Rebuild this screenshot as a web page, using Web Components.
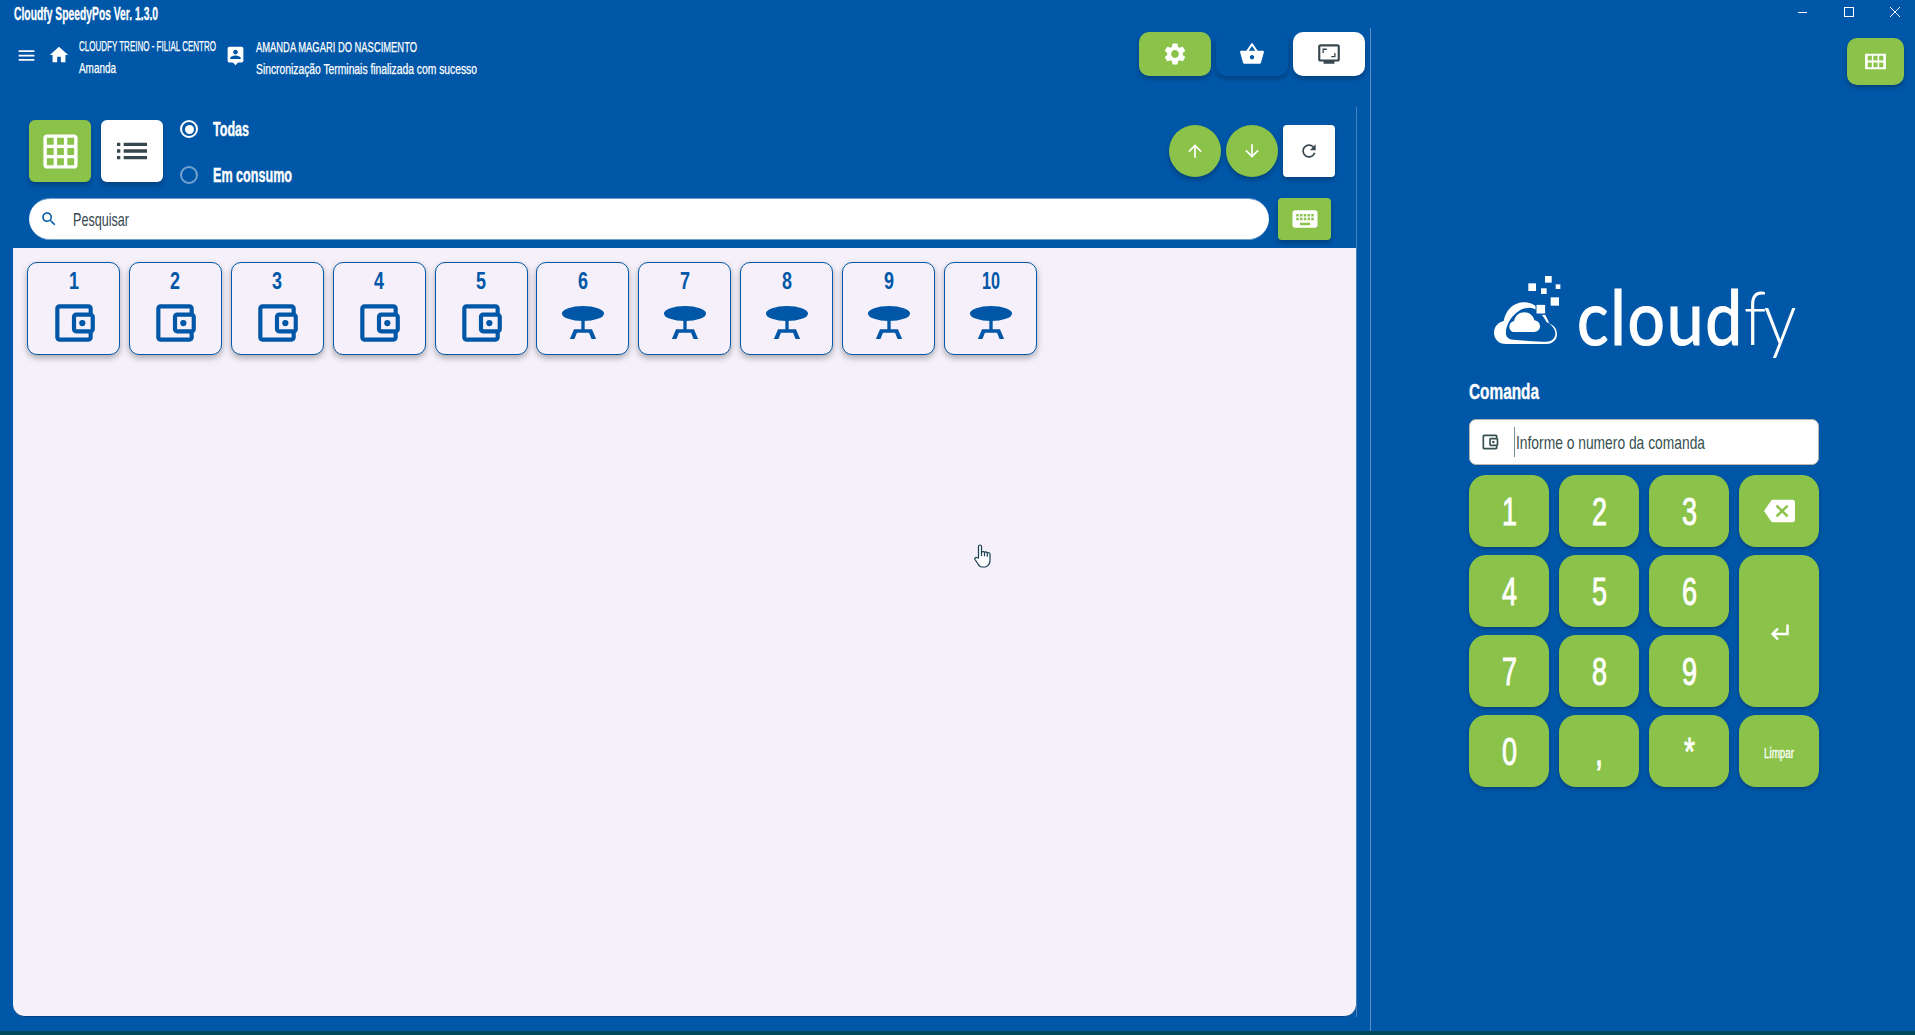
<!DOCTYPE html>
<html lang="pt-BR">
<head>
<meta charset="utf-8">
<title>Cloudfy SpeedyPos</title>
<style>
  html, body { margin: 0; height: 100%; }
  body {
    background: #0057a8;
    overflow: hidden;
    color: #fff;
    font-family: "Liberation Sans", sans-serif;
  }
</style>
</head>
<body>
<pos-app></pos-app>

<script>
/**
 * Icon set: the 24x24 paths the app uses.
 */
const ICONS = {
  menu: '<path d="M3 18h18v-2H3v2zm0-5h18v-2H3v2zm0-7v2h18V6H3z"/>',
  home: '<path d="M10 20v-6h4v6h5v-8h3L12 3 2 12h3v8z"/>',
  person: '<path d="M19 2H5c-1.11 0-2 .9-2 2v14c0 1.1.89 2 2 2h4l3 3 3-3h4c1.1 0 2-.9 2-2V4c0-1.1-.9-2-2-2zm-7 3.3c1.49 0 2.7 1.21 2.7 2.7 0 1.49-1.21 2.7-2.7 2.7-1.49 0-2.7-1.21-2.7-2.7 0-1.49 1.21-2.7 2.7-2.7zM18 16H6v-.9c0-2 4-3.1 6-3.1s6 1.1 6 3.1v.9z"/>',
  settings: '<path d="M19.14 12.94c.04-.3.06-.61.06-.94 0-.32-.02-.64-.07-.94l2.03-1.58c.18-.14.23-.41.12-.61l-1.92-3.32c-.12-.22-.37-.29-.59-.22l-2.39.96c-.5-.38-1.03-.7-1.62-.94l-.36-2.54c-.04-.24-.24-.41-.48-.41h-3.84c-.24 0-.43.17-.47.41l-.36 2.54c-.59.24-1.13.57-1.62.94l-2.39-.96c-.22-.08-.47 0-.59.22L2.74 8.87c-.12.21-.08.47.12.61l2.03 1.58c-.05.3-.09.63-.09.94s.02.64.07.94l-2.03 1.58c-.18.14-.23.41-.12.61l1.92 3.32c.12.22.37.29.59.22l2.39-.96c.5.38 1.03.7 1.62.94l.36 2.54c.05.24.24.41.48.41h3.84c.24 0 .44-.17.47-.41l.36-2.54c.59-.24 1.13-.56 1.62-.94l2.39.96c.22.08.47 0 .59-.22l1.92-3.32c.12-.22.07-.47-.12-.61l-2.01-1.58zM12 15.6c-1.98 0-3.6-1.62-3.6-3.6s1.62-3.6 3.6-3.6 3.6 1.62 3.6 3.6-1.62 3.6-3.6 3.6z"/>',
  basket: '<path d="M17.21 9l-4.38-6.56c-.19-.28-.51-.42-.83-.42-.32 0-.64.14-.83.43L6.79 9H2c-.55 0-1 .45-1 1 0 .09.01.18.04.27l2.54 9.27c.23.84 1 1.46 1.92 1.46h13c.92 0 1.69-.62 1.93-1.46l2.54-9.27L23 10c0-.55-.45-1-1-1h-4.79zM9 9l3-4.4L15 9H9zm3 8c-1.1 0-2-.9-2-2s.9-2 2-2 2 .9 2 2-.9 2-2 2z"/>',
  screen: '<path fill-rule="evenodd" d="M4 3h16c1.1 0 2 .9 2 2v12c0 1.1-.9 2-2 2h-3v2H7v-2H4c-1.1 0-2-.9-2-2V5c0-1.1.9-2 2-2zm0 2v12h16V5H4z"/><path d="M6 7h4v1.200H7.200V11H6zM18 15h-4v-1.200h2.800V11H18z"/>',
  grid: '<path d="M20 2H4c-1.1 0-2 .9-2 2v16c0 1.1.9 2 2 2h16c1.1 0 2-.9 2-2V4c0-1.1-.9-2-2-2zM8 20H4v-4h4v4zm0-6H4v-4h4v4zm0-6H4V4h4v4zm6 12h-4v-4h4v4zm0-6h-4v-4h4v4zm0-6h-4V4h4v4zm6 12h-4v-4h4v4zm0-6h-4v-4h4v4zm0-6h-4V4h4v4z"/>',
  comfy: '<path fill-rule="evenodd" d="M2 4h20v16H2zM4.500 6v5h4v-5zM10 6v5h4v-5zM15.500 6v5h4v-5zM4.500 13v5h4v-5zM10 13v5h4v-5zM15.500 13v5h4v-5z"/>',
  list: '<path d="M3 13h2v-2H3v2zm0 4h2v-2H3v2zm0-8h2V7H3v2zm4 4h14v-2H7v2zm0 4h14v-2H7v2zM7 7v2h14V7H7z"/>',
  up: '<path d="M4 12l1.41 1.41L11 7.83V20h2V7.830l5.580 5.590L20 12l-8-8-8 8z"/>',
  down: '<path d="M20 12l-1.41-1.41L13 16.170V4h-2v12.170l-5.580-5.590L4 12l8 8 8-8z"/>',
  refresh: '<path d="M17.65 6.35C16.2 4.9 14.21 4 12 4c-4.42 0-7.99 3.58-7.99 8s3.57 8 7.99 8c3.73 0 6.84-2.55 7.73-6h-2.08c-.82 2.33-3.04 4-5.65 4-3.31 0-6-2.69-6-6s2.69-6 6-6c1.66 0 3.14.69 4.22 1.78L13 11h7V4l-2.35 2.35z"/>',
  search: '<path d="M15.5 14h-.79l-.28-.27C15.41 12.59 16 11.11 16 9.5 16 5.91 13.09 3 9.5 3S3 5.91 3 9.5 5.91 16 9.5 16c1.61 0 3.09-.59 4.23-1.57l.27.28v.79l5 4.99L20.49 19l-4.99-5zm-6 0C7.01 14 5 11.99 5 9.5S7.01 5 9.5 5 14 7.01 14 9.5 11.99 14 9.5 14z"/>',
  keyboard: '<path d="M20 5H4c-1.1 0-1.99.9-1.99 2L2 17c0 1.1.9 2 2 2h16c1.1 0 2-.9 2-2V7c0-1.1-.9-2-2-2zm-9 3h2v2h-2V8zm0 3h2v2h-2v-2zM8 8h2v2H8V8zm0 3h2v2H8v-2zm-1 2H5v-2h2v2zm0-3H5V8h2v2zm9 7H8v-2h8v2zm0-4h-2v-2h2v2zm0-3h-2V8h2v2zm3 3h-2v-2h2v2zm0-3h-2V8h2v2z"/>',
  wallet: '<path d="M21 7.280V5c0-1.100-.9-2-2-2H5c-1.110 0-2 .9-2 2v14c0 1.100.89 2 2 2h14c1.100 0 2-.9 2-2v-2.280c.59-.35 1-.98 1-1.720V9c0-.74-.41-1.380-1-1.720zM20 9v6h-7V9h7zM5 19V5h14v2h-6c-1.100 0-2 .9-2 2v6c0 1.100.9 2 2 2h6v2H5z"/><circle cx="16" cy="12" r="1.5"/>',
  table: '<ellipse cx="12" cy="7.440" rx="10.100" ry="3.600"/><path d="M11.200 10h1.600v5h3.500l2 4.700h-2.200l-1.200-3H9.100l-1.200 3H5.700l2-4.700h3.500z"/>',
  backspace: '<path d="M22 3H7c-.69 0-1.230.35-1.590.88L0 12l5.410 8.110c.36.53.9.89 1.590.89h15c1.100 0 2-.9 2-2V5c0-1.100-.9-2-2-2zm-3 12.590L17.590 17 14 13.410 10.410 17 9 15.590 12.590 12 9 8.410 10.410 7 14 10.590 17.590 7 19 8.410 15.410 12 19 15.590z"/>',
  enter: '<path fill="none" stroke="currentColor" stroke-width="2.400" d="M20.500 2.500V12H6M11 6.500 5.500 12l5.500 5.500"/>'
};

/**
 * Icon
 * <pos-icon name="home" size="24"></pos-icon>
 */
class PosIcon extends HTMLElement {
  constructor() {
    super();
    this.attachShadow({ mode: 'open' });
  }

  connectedCallback() {
    const size = this.getAttribute('size') || 24;
    const w = this.getAttribute('w') || size;
    const h = this.getAttribute('h') || size;
    this.shadowRoot.innerHTML = `
      <style>
        :host { display: inline-flex; flex: none; color: inherit; }
        svg { display: block; fill: currentColor; }
      </style>
      <svg width="${w}" height="${h}" viewBox="0 0 24 24" preserveAspectRatio="none">${ICONS[this.getAttribute('name')] || ''}</svg>
    `;
  }
}
customElements.define('pos-icon', PosIcon);

/**
 * Condensed text. The app's narrow display font is not available, so the
 * text is squeezed horizontally to the width given in the w attribute.
 * <pos-text w="137">Label</pos-text>
 */
class PosText extends HTMLElement {
  constructor() {
    super();
    this.attachShadow({ mode: 'open' });
  }

  connectedCallback() {
    const w = Number(this.getAttribute('w'));
    this.shadowRoot.innerHTML = `
      <style>
        :host { display: inline-block; flex: none; width: ${w}px; white-space: nowrap; }
        span { display: inline-block; transform-origin: left center; }
      </style>
      <span><slot></slot></span>
    `;
    const span = this.shadowRoot.querySelector('span');
    span.style.transform = `scaleX(${w / span.getBoundingClientRect().width})`;
  }
}
customElements.define('pos-text', PosText);

/**
 * Rounded action button
 * variant: green | white | blue, plus w / h / radius attributes
 */
class PosButton extends HTMLElement {
  constructor() {
    super();
    this.attachShadow({ mode: 'open' });
  }

  connectedCallback() {
    const w = this.getAttribute('w') || 72;
    const h = this.getAttribute('h') || 44;
    const r = this.getAttribute('radius') || 10;
    this.shadowRoot.innerHTML = `
      <style>
        :host {
          display: flex;
          flex: none;
          width: ${w}px;
          height: ${h}px;
          border-radius: ${r}px;
          align-items: center;
          justify-content: center;
          box-shadow: 0 3px 5px rgba(0, 0, 0, .25);
        }
        :host([variant="green"]) { background: #8bc34a; color: #fff; }
        :host([variant="white"]) { background: #fff; color: #37474f; }
        :host([variant="blue"]) { background: #0057a8; color: #fff; }
      </style>
      <slot></slot>
    `;
  }
}
customElements.define('pos-button', PosButton);

/**
 * Title bar with window controls
 */
class PosTitlebar extends HTMLElement {
  constructor() {
    super();
    this.attachShadow({ mode: 'open' });
  }

  connectedCallback() {
    this.shadowRoot.innerHTML = `
      <style>
        :host {
          display: flex;
          height: 28px;
          align-items: center;
          justify-content: space-between;
          padding-left: 14px;
        }
        pos-text { font-size: 18px; font-weight: 700; -webkit-text-stroke: .3px #fff; }
        .controls { display: flex; gap: 34px; margin: -4px 14px 0 0; }
        svg { display: block; stroke: #fff; fill: none; stroke-width: 1; }
      </style>
      <pos-text w="144">Cloudfy SpeedyPos Ver. 1.3.0</pos-text>
      <div class="controls">
        <svg width="12" height="12"><path d="M1 6.500h9"/></svg>
        <svg width="12" height="12"><rect x="1.500" y="1.500" width="9" height="9"/></svg>
        <svg width="12" height="12"><path d="M1 1l10 10M11 1L1 11"/></svg>
      </div>
    `;
  }
}
customElements.define('pos-titlebar', PosTitlebar);

/**
 * Header: branch, user, sync message and the three action buttons
 */
class PosHeader extends HTMLElement {
  constructor() {
    super();
    this.attachShadow({ mode: 'open' });
  }

  connectedCallback() {
    this.shadowRoot.innerHTML = `
      <style>
        :host {
          display: flex;
          height: 44px;
          align-items: center;
          padding: 4px 5px 0 16px;
          font-size: 14px;
          -webkit-text-stroke: .25px #fff;
        }
        .block { display: flex; flex-direction: column; gap: 7px; line-height: 15px; }
        .block pos-text { display: block; }
        .branch { margin: 6px 9px 0 9px; }
        .user { margin: 8px 0 0 10px; }
        .home { margin-left: 11px; }
        .menu, .home { margin-top: 2px; }
        .person { margin-top: 3px; }
        .actions { margin-left: auto; display: flex; gap: 5px; }
      </style>
      <pos-icon class="menu" name="menu" size="21"></pos-icon>
      <pos-icon class="home" name="home" size="22"></pos-icon>
      <div class="block branch"><pos-text w="137">CLOUDFY TREINO - FILIAL CENTRO</pos-text><pos-text w="37">Amanda</pos-text></div>
      <pos-icon class="person" name="person" size="21"></pos-icon>
      <div class="block user"><pos-text w="161">AMANDA MAGARI DO NASCIMENTO</pos-text><pos-text w="221">Sincronização Terminais finalizada com sucesso</pos-text></div>
      <div class="actions">
        <pos-button variant="green"><pos-icon name="settings" size="26"></pos-icon></pos-button>
        <pos-button variant="blue"><pos-icon name="basket" size="26"></pos-icon></pos-button>
        <pos-button variant="white"><pos-icon name="screen" size="26"></pos-icon></pos-button>
      </div>
    `;
  }
}
customElements.define('pos-header', PosHeader);

/**
 * Radio option with a label
 */
class PosRadio extends HTMLElement {
  constructor() {
    super();
    this.attachShadow({ mode: 'open' });
  }

  connectedCallback() {
    this.shadowRoot.innerHTML = `
      <style>
        :host {
          display: flex;
          align-items: center;
          gap: 15px;
          height: 28px;
          font-size: 20px;
          font-weight: 700;
          color: #fff;
          -webkit-text-stroke: .4px #fff;
        }
        .dot {
          width: 18px;
          height: 18px;
          box-sizing: border-box;
          border-radius: 50%;
          border: 2px solid rgba(255, 255, 255, .45);
          display: flex;
          align-items: center;
          justify-content: center;
        }
        :host([checked]) .dot { border-color: #fff; }
        :host([checked]) .dot::after { content: ""; width: 9px; height: 9px; border-radius: 50%; background: #fff; }
      </style>
      <span class="dot"></span>
      <slot></slot>
    `;
  }
}
customElements.define('pos-radio', PosRadio);

/**
 * Toolbar: view switch, filter radios, paging and refresh
 */
class PosToolbar extends HTMLElement {
  constructor() {
    super();
    this.attachShadow({ mode: 'open' });
  }

  connectedCallback() {
    this.shadowRoot.innerHTML = `
      <style>
        :host { display: flex; align-items: flex-start; padding: 0 21px 0 16px; height: 62px; }
        .radios { display: flex; flex-direction: column; gap: 18px; margin: -5px 0 0 17px; }
        .views { display: flex; gap: 10px; }
        .right { margin-left: auto; display: flex; gap: 5px; margin-top: 5px; }
      </style>
      <div class="views">
        <pos-button variant="green" w="62" h="62" radius="6"><pos-icon name="grid" size="41"></pos-icon></pos-button>
        <pos-button variant="white" w="62" h="62" radius="6"><pos-icon name="list" size="40"></pos-icon></pos-button>
      </div>
      <div class="radios">
        <pos-radio checked><pos-text w="36">Todas</pos-text></pos-radio>
        <pos-radio><pos-text w="79">Em consumo</pos-text></pos-radio>
      </div>
      <div class="right">
        <pos-button variant="green" w="52" h="52" radius="26"><pos-icon name="up" size="20"></pos-icon></pos-button>
        <pos-button variant="green" w="52" h="52" radius="26"><pos-icon name="down" size="20"></pos-icon></pos-button>
        <pos-button variant="white" w="52" h="52" radius="4"><pos-icon name="refresh" size="20"></pos-icon></pos-button>
      </div>
    `;
  }
}
customElements.define('pos-toolbar', PosToolbar);

/**
 * Search pill with the on-screen keyboard button
 */
class PosSearch extends HTMLElement {
  constructor() {
    super();
    this.attachShadow({ mode: 'open' });
  }

  connectedCallback() {
    this.shadowRoot.innerHTML = `
      <style>
        :host { display: flex; gap: 9px; padding: 0 25px 0 16px; height: 42px; }
        .pill {
          flex: 1;
          background: #fff;
          border-radius: 21px;
          border-top: 1px solid #6f9fd0;
          border-bottom: 1px solid #6f9fd0;
          box-sizing: border-box;
          display: flex;
          align-items: center;
          gap: 15px;
          padding-left: 11px;
          color: #0057a8;
        }
        pos-text { color: #37474f; font-size: 19px; margin-top: 2px; }
      </style>
      <div class="pill">
        <pos-icon name="search" size="18"></pos-icon>
        <pos-text w="56">Pesquisar</pos-text>
      </div>
      <pos-button variant="green" w="53" h="42" radius="4"><pos-icon name="keyboard" size="30"></pos-icon></pos-button>
    `;
  }
}
customElements.define('pos-search', PosSearch);

/**
 * Table / tab card
 * <pos-card number="1" icon="wallet"></pos-card>
 */
class PosCard extends HTMLElement {
  constructor() {
    super();
    this.attachShadow({ mode: 'open' });
  }

  connectedCallback() {
    const number = this.getAttribute('number');
    this.shadowRoot.innerHTML = `
      <style>
        :host {
          display: flex;
          flex-direction: column;
          align-items: center;
          box-sizing: border-box;
          width: 93px;
          height: 93px;
          padding-top: 6px;
          border: 1px solid #0057a8;
          border-radius: 10px;
          box-shadow: 0 3px 6px rgba(0, 0, 0, .3);
          background: #f5f0f9;
          color: #0057a8;
        }
        pos-text { font-size: 24px; font-weight: 700; line-height: 24px; }
        pos-icon { margin-top: 5px; }
      </style>
      <pos-text w="${number.length > 1 ? 18 : 10}">${number}</pos-text>
      <pos-icon name="${this.getAttribute('icon')}" size="50"></pos-icon>
    `;
  }
}
customElements.define('pos-card', PosCard);

/**
 * Main panel on the left that holds the cards
 */
class PosPanel extends HTMLElement {
  constructor() {
    super();
    this.attachShadow({ mode: 'open' });
  }

  connectedCallback() {
    this.shadowRoot.innerHTML = `
      <style>
        :host {
          display: flex;
          flex-wrap: wrap;
          align-content: flex-start;
          gap: 8.9px;
          box-sizing: border-box;
          flex: 1;
          padding: 14px;
          background: #f5f0f9;
          border-radius: 0 0 12px 12px;
          border-bottom: 1px solid #003f7d;
          position: relative;
        }
        /* mouse pointer caught in the screenshot */
        .pointer { position: absolute; left: 961px; top: 296px; }
      </style>
      <slot></slot>
      <svg class="pointer" width="18" height="24" viewBox="0 0 18 24" fill="#fdfcfe" stroke="#173f4f" stroke-width="1.200">
        <path d="M4.500 14V2.500a1.500 1.500 0 0 1 3 0V8c1-.8 2.500-.5 3 .3 1-.6 2.200-.3 2.800.5 1-.4 2.500 0 2.700 1.200V16c0 3-2 6-4.500 7H8c-2 0-3-1-4-3L1 15.500c-.8-1.500 1-2.800 2.200-1.700z"/>
        <path d="M7.500 8v4M10.500 8.300v4M13.300 8.800v4"/>
      </svg>
    `;
  }
}
customElements.define('pos-panel', PosPanel);

/**
 * Cloudfy logo: the cloud mark plus the wordmark as live text
 */
class PosLogo extends HTMLElement {
  constructor() {
    super();
    this.attachShadow({ mode: 'open' });
  }

  connectedCallback() {
    this.shadowRoot.innerHTML = `
      <style>
        :host { display: flex; align-items: flex-start; height: 74px; margin-left: 25px; }
        svg { display: block; flex: none; }
        pos-text {
          margin: 3px 0 0 16px;
          font-family: Lato, "Open Sans", sans-serif;
          font-size: 75px;
          line-height: 74px;
          color: #fff;
        }
        b { font-weight: 400; letter-spacing: 2px; -webkit-text-stroke: 1.2px #fff; }
        i { font-style: normal; font-weight: 300; letter-spacing: -3px; }
      </style>
      <svg width="66.700" height="68" viewBox="42 33 200 204" fill="#fff">
        <path d="M78 237C56 237 42 222 42 203C42 186 54 172 71 168C77 136 100 112 132 112C146 112 158 116 168 124L168 148L196 150C202 162 206 170 208 176C222 180 231 192 231 207C231 224 218 237 200 237Z"/>
        <path fill="#0057a8" d="M100 224C84 224 76 214 78 200C80 170 110 128 150 128C172 130 190 150 200 172C214 178 226 192 226 206C226 220 214 230 198 230C170 232 130 226 100 224Z"/>
        <path d="M104 201C94 201 88 194 88 185C88 176 94 170 102 168C106 152 118 142 133 142C148 142 160 152 163 166C173 167 180 175 180 184C180 194 172 201 162 201Z"/>
        <rect x="145" y="55" width="23" height="23"/>
        <rect x="195" y="33" width="20" height="20"/>
        <rect x="183" y="70" width="17" height="17"/>
        <rect x="227" y="58" width="14" height="14"/>
        <rect x="212" y="97" width="25" height="25"/>
        <rect x="168" y="118" width="29" height="29" stroke="#0057a8" stroke-width="3"/>
      </svg>
      <pos-text w="217"><b>cloud</b><i>fy</i></pos-text>
    `;
  }
}
customElements.define('pos-logo', PosLogo);

/**
 * Keypad button
 */
class PosKey extends HTMLElement {
  constructor() {
    super();
    this.attachShadow({ mode: 'open' });
  }

  connectedCallback() {
    this.shadowRoot.innerHTML = `
      <style>
        :host {
          display: flex;
          align-items: center;
          justify-content: center;
          background: #8bc34a;
          border-radius: 17px;
          box-shadow: 0 2px 4px rgba(0, 0, 0, .25);
          color: #fff;
          font-size: 38px;
          font-weight: 400;
          -webkit-text-stroke: .9px #fff;
        }
        ::slotted(pos-text) { margin-top: 3px; }
      </style>
      <slot></slot>
    `;
  }
}
customElements.define('pos-key', PosKey);

/**
 * Right column: logo, tab number input and keypad
 */
class PosSide extends HTMLElement {
  constructor() {
    super();
    this.attachShadow({ mode: 'open' });
  }

  connectedCallback() {
    const digit = n => `<pos-key><pos-text w="15">${n}</pos-text></pos-key>`;
    this.shadowRoot.innerHTML = `
      <style>
        :host {
          display: flex;
          flex-direction: column;
          flex: 1;
          box-sizing: border-box;
          border-left: 1px solid rgba(255, 255, 255, .35);
          padding: 0 0 0 98px;
        }
        .corner { display: flex; justify-content: flex-end; padding: 10px 11px 0 0; height: 47px; margin-bottom: 191px; }
        .label { font-size: 22px; font-weight: 700; -webkit-text-stroke: .4px #fff; margin-top: 30px; height: 25px; line-height: 24px; }
        .input {
          width: 350px;
          height: 46px;
          margin-top: 14px;
          box-sizing: border-box;
          background: #fff;
          border: 1px solid #b8b8b0;
          border-radius: 7px;
          display: flex;
          align-items: center;
          padding-left: 10px;
          color: #37504f;
          font-size: 19px;
        }
        .input pos-text { margin-top: 2px; }
        .caret { width: 1px; height: 30px; background: #78909c; margin: 0 1px 0 14px; }
        .keys {
          margin-top: 10px;
          width: 350px;
          display: grid;
          grid-template-columns: repeat(4, 80px);
          grid-auto-rows: 72px;
          gap: 8px 10px;
        }
        .enter { grid-column: 4; grid-row: 2 / span 2; padding-top: 6px; }
        .small { font-size: 14px; -webkit-text-stroke: .3px #fff; }
      </style>
      <div class="corner">
        <pos-button variant="green" w="57" h="47" radius="10"><pos-icon name="comfy" w="25" h="23"></pos-icon></pos-button>
      </div>
      <pos-logo></pos-logo>
      <div class="label"><pos-text w="70">Comanda</pos-text></div>
      <div class="input">
        <pos-icon name="wallet" size="20"></pos-icon>
        <span class="caret"></span>
        <pos-text w="189">Informe o numero da comanda</pos-text>
      </div>
      <div class="keys">
        ${digit(1)}${digit(2)}${digit(3)}
        <pos-key><pos-icon name="backspace" w="31" h="30"></pos-icon></pos-key>
        ${digit(4)}${digit(5)}${digit(6)}
        <pos-key class="enter"><pos-icon name="enter" size="24"></pos-icon></pos-key>
        ${digit(7)}${digit(8)}${digit(9)}
        ${digit(0)}
        <pos-key><pos-text w="8">,</pos-text></pos-key>
        <pos-key><pos-text w="11">*</pos-text></pos-key>
        <pos-key class="small"><pos-text w="30">Limpar</pos-text></pos-key>
      </div>
    `;
  }
}
customElements.define('pos-side', PosSide);

/**
 * Whole window
 */
class PosApp extends HTMLElement {
  constructor() {
    super();
    this.attachShadow({ mode: 'open' });
  }

  connectedCallback() {
    const cards = [1, 2, 3, 4, 5, 6, 7, 8, 9, 10].map(n =>
      `<pos-card number="${n}" icon="${n < 6 ? 'wallet' : 'table'}"></pos-card>`
    ).join('');
    this.shadowRoot.innerHTML = `
      <style>
        :host { display: flex; flex-direction: column; height: 1035px; width: 1915px; overflow: hidden; }
        .body { flex: 1; display: flex; min-height: 0; }
        .left { width: 1370px; display: flex; flex-direction: column; flex: none; }
        .work {
          flex: 1;
          display: flex;
          flex-direction: column;
          width: 1343px;
          margin: 31px 0 14px 13px;
          padding-top: 13px;
          border-right: 1px solid rgba(255, 255, 255, .25);
        }
        pos-search { margin: 16px 0 8px; }
        .strip { height: 4px; background: #004a5c; flex: none; }
      </style>
      <pos-titlebar></pos-titlebar>
      <div class="body">
        <div class="left">
          <pos-header></pos-header>
          <div class="work">
            <pos-toolbar></pos-toolbar>
            <pos-search></pos-search>
            <pos-panel>${cards}</pos-panel>
          </div>
        </div>
        <pos-side></pos-side>
      </div>
      <div class="strip"></div>
    `;
  }
}
customElements.define('pos-app', PosApp);
</script>
</body>
</html>
